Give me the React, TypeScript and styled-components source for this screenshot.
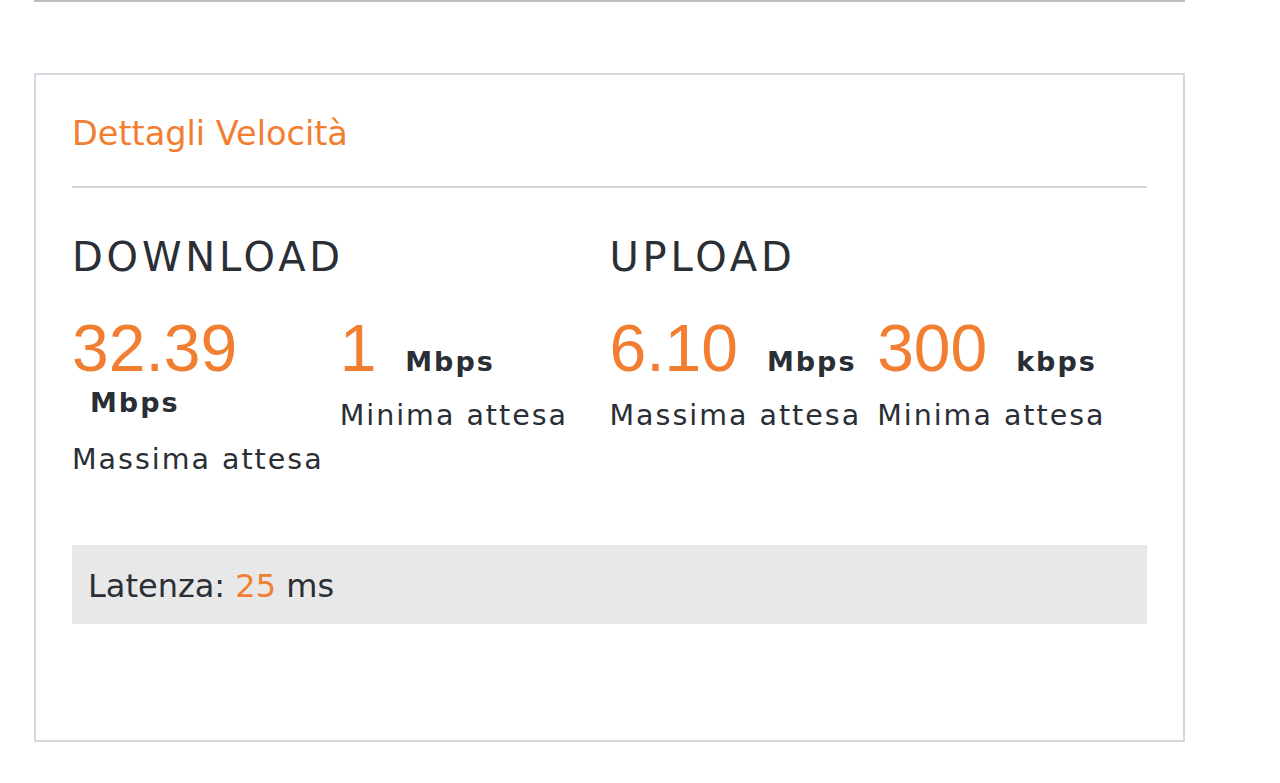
import styled, { createGlobalStyle, css } from "styled-components";

const ORANGE = "#f17e31";
const INK = "#2a2e35";

const GlobalStyle = createGlobalStyle`
  body {
    margin: 0;
    background: #fff;
    font-family: "DejaVu Sans", "Liberation Sans", sans-serif;
    color: ${INK};
  }
`;

const Page = styled.div`
  width: 1151px;
  padding-left: 34px;
`;

const TopRule = styled.div`
  height: 2px;
  background: #bfbfbf;
`;

const Card = styled.section`
  margin-top: 71px;
  border: 2px solid #d5d8df;
  padding: 39px 36px 116px;
`;

const Title = styled.h2`
  margin: 0;
  font-size: 33.5px;
  line-height: 40px;
  font-weight: 400;
  color: ${ORANGE};
`;

const Divider = styled.div`
  margin-top: 32px;
  height: 2px;
  background: #d3d5dd;
`;

const Columns = styled.div`
  display: grid;
  grid-template-columns: 1fr 1fr;
  margin-top: 44px;
`;

const Heading = styled.h3`
  margin: 0 0 47px;
  font-size: 40px;
  line-height: 50px;
  font-weight: 400;
  letter-spacing: 3.8px;
`;

const Items = styled.div`
  display: flex;
  align-items: flex-start;
  gap: 16px;
`;

const Item = styled.div`
  flex: none;
`;

const ValueLine = styled.div`
  font-size: 28px;
  line-height: 38px;
  white-space: nowrap;
`;

const Num = styled.span`
  font-family: "Liberation Sans", Arial, sans-serif;
  font-size: 66px;
  color: ${ORANGE};
`;

const Unit = styled.span<{ $stacked?: boolean }>`
  margin-left: 20px;
  font-size: 27px;
  font-weight: 700;
  letter-spacing: 2px;

  ${(p) =>
    p.$stacked &&
    css`
      display: block;
      margin-left: 18px;
      padding: 3px 0;
    `}
`;

const Label = styled.div`
  margin-top: 16px;
  font-size: 28.5px;
  line-height: 38px;
  letter-spacing: 2px;
`;

const Latency = styled.div`
  margin-top: 66px;
  padding: 22px 16px 19px;
  background: #e8e8e8;
  font-size: 32px;
  line-height: 38px;
`;

const Accent = styled.span`
  color: ${ORANGE};
`;

interface Reading {
  value: string;
  unit: string;
  label: string;
  stacked?: boolean;
}

const sections: { title: string; readings: Reading[] }[] = [
  {
    title: "DOWNLOAD",
    readings: [
      { value: "32.39", unit: "Mbps", label: "Massima attesa", stacked: true },
      { value: "1", unit: "Mbps", label: "Minima attesa" },
    ],
  },
  {
    title: "UPLOAD",
    readings: [
      { value: "6.10", unit: "Mbps", label: "Massima attesa" },
      { value: "300", unit: "kbps", label: "Minima attesa" },
    ],
  },
];

export default function App() {
  return (
    <>
      <GlobalStyle />
      <Page>
        <TopRule />
        <Card>
          <Title>Dettagli Velocità</Title>
          <Divider />
          <Columns>
            {sections.map((s) => (
              <div key={s.title}>
                <Heading>{s.title}</Heading>
                <Items>
                  {s.readings.map((r) => (
                    <Item key={r.label}>
                      <ValueLine>
                        <Num>{r.value}</Num> <Unit $stacked={r.stacked}>{r.unit}</Unit>
                      </ValueLine>
                      <Label>{r.label}</Label>
                    </Item>
                  ))}
                </Items>
              </div>
            ))}
          </Columns>
          <Latency>
            Latenza: <Accent>25</Accent> ms
          </Latency>
        </Card>
      </Page>
    </>
  );
}
